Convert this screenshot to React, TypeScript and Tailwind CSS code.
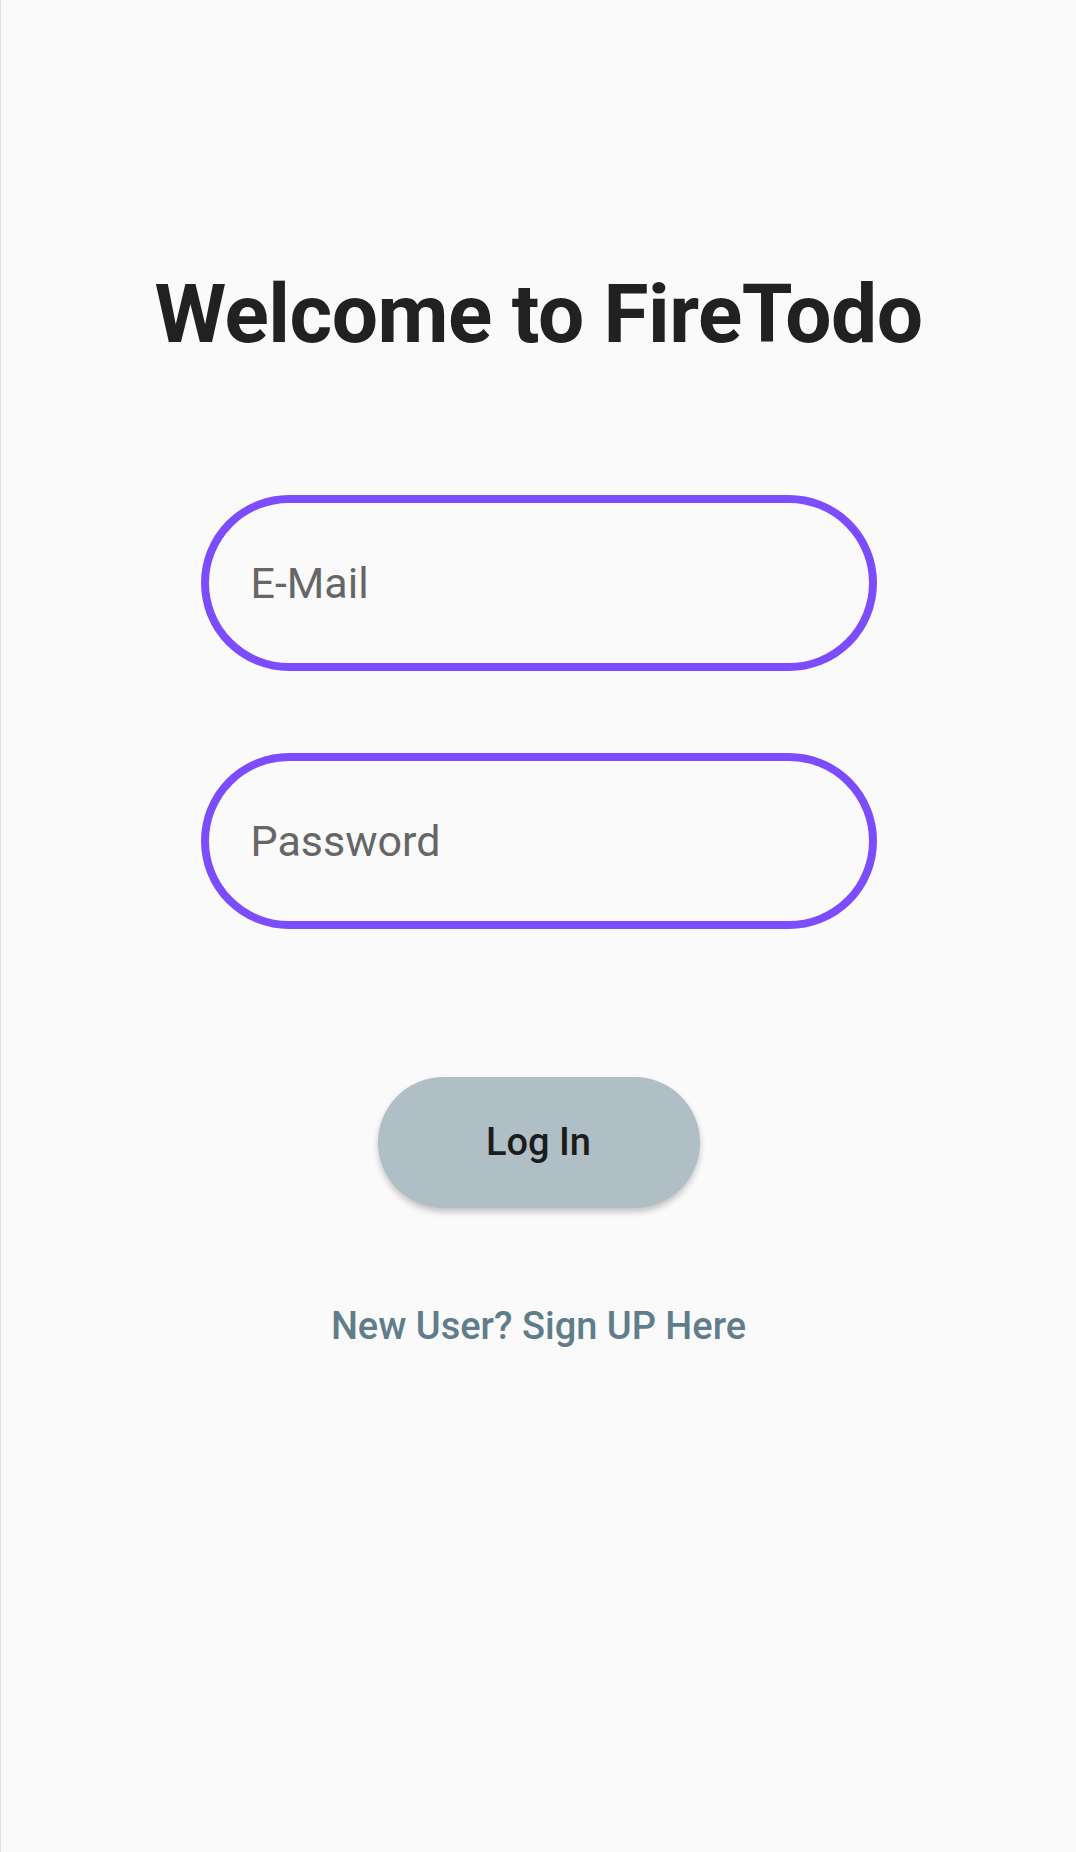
import React from "react";

const App = () => {
  return (
    <div
      className="min-h-[1852px] w-full bg-[#fafafa] border-l border-[#e3e3e3] flex flex-col items-center"
      style={{ fontFamily: "Roboto, 'Noto Sans', sans-serif" }}
    >
      {/* Title */}
      <h1 className="mt-[273px] text-[82px] leading-none font-bold text-[#212121] tracking-[-0.5px]">
        Welcome to FireTodo
      </h1>

      {/* Inputs */}
      <div className="mt-[140px] flex flex-col gap-[82px]">
        <input
          type="email"
          placeholder="E-Mail"
          className="w-[676px] h-[176px] rounded-full border-[8px] border-[#7c4dff] bg-transparent px-[42px] text-[43px] text-[#212121] placeholder:text-[#666666] outline-none"
        />
        <input
          type="password"
          placeholder="Password"
          className="w-[676px] h-[176px] rounded-full border-[8px] border-[#7c4dff] bg-transparent px-[42px] text-[43px] text-[#212121] placeholder:text-[#666666] outline-none"
        />
      </div>

      {/* Log in */}
      <button className="mt-[148px] w-[322px] h-[131px] rounded-full bg-[#b0bec5] text-[38px] font-medium text-[#1c1c1c] shadow-[0_4px_6px_rgba(0,0,0,0.22)]">
        Log In
      </button>

      {/* Sign up link */}
      <a
        href="#"
        className="mt-[99px] text-[38px] leading-none font-medium text-[#607d8b]"
      >
        New User? Sign UP Here
      </a>
    </div>
  );
};

export default App;
